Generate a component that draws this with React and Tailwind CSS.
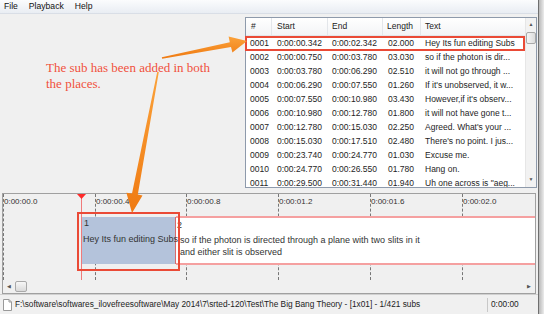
import React from 'react';

const rows = [
  ['0001', '0:00:00.342', '0:00:02.342', '02.000', 'Hey Its fun editing Subs'],
  ['0002', '0:00:00.750', '0:00:03.780', '03.030', 'so if the photon is dir...'],
  ['0003', '0:00:03.780', '0:00:06.290', '02.510', 'it will not go through ...'],
  ['0004', '0:00:06.290', '0:00:07.550', '01.260', "If it's unobserved, it w..."],
  ['0005', '0:00:07.550', '0:00:10.980', '03.430', "However,if it's observ..."],
  ['0006', '0:00:10.980', '0:00:12.780', '01.800', 'it will not have gone t...'],
  ['0007', '0:00:12.780', '0:00:15.030', '02.250', "Agreed. What's your ..."],
  ['0008', '0:00:15.030', '0:00:17.510', '02.480', "There's no point. I jus..."],
  ['0009', '0:00:23.740', '0:00:24.770', '01.030', 'Excuse me.'],
  ['0010', '0:00:24.770', '0:00:26.550', '01.780', 'Hang on.'],
  ['0011', '0:00:29.500', '0:00:31.440', '01.940', 'Uh one across is "aeg...'],
];

const ticks = [
  { x: 0, label: '0:00:00.0' },
  { x: 92, label: '0:00:00.4' },
  { x: 183, label: '0:00:00.8' },
  { x: 275, label: '0:00:01.2' },
  { x: 367, label: '0:00:01.6' },
  { x: 459, label: '0:00:02.0' },
];

const SubsTable = () => (
  <div className="w-[292px] h-[171px] border border-[#8e9aab] bg-white flex overflow-hidden">
    <div className="flex-1 min-w-0 flex flex-col">
      {/* header */}
      <div className="flex h-[18px] shrink-0 items-center bg-gradient-to-b from-white to-[#f3f4f6] border-b border-[#e3e6ea] text-[#222]">
        <div className="w-[26px] pl-[5px] border-r border-[#e3e6ea] h-full flex items-center">#</div>
        <div className="w-[56px] pl-[5px] border-r border-[#e3e6ea] h-full flex items-center">Start</div>
        <div className="w-[55px] pl-[4px] border-r border-[#e3e6ea] h-full flex items-center">End</div>
        <div className="w-[38px] pl-[4px] border-r border-[#e3e6ea] h-full flex items-center">Length</div>
        <div className="flex-1 pl-[4px] h-full flex items-center">Text</div>
      </div>
      {rows.map((r) => (
        <div key={r[0]} className="flex h-[14px] shrink-0 items-center text-[#1e1e1e] whitespace-nowrap">
          <div className="w-[26px] pl-[4px]">{r[0]}</div>
          <div className="w-[56px] pl-[5px]">{r[1]}</div>
          <div className="w-[55px] pl-[4px]">{r[2]}</div>
          <div className="w-[38px] pl-[5px]">{r[3]}</div>
          <div className="flex-1 pl-[4px] overflow-hidden">{r[4]}</div>
        </div>
      ))}
    </div>
    {/* vertical scrollbar */}
    <div className="w-[11px] bg-[#f2f2f2] border-l border-[#e6e6e6] flex flex-col items-center">
      <div className="h-[14px] flex items-center justify-center text-[#555] text-[5px]">▲</div>
      <div className="w-[10px] h-[12px] rounded-[2px] border border-[#a9a9a9] bg-gradient-to-r from-[#f5f5f5] to-[#dcdcdc]" />
      <div className="flex-1" />
      <div className="h-[14px] flex items-center justify-center text-[#555] text-[5px]">▼</div>
    </div>
  </div>
);

const Timeline = () => (
  <div className="h-[101px] ml-[2px] mr-[2px] border border-[#a0a0a0] flex flex-col bg-[#f0f0f0]">
    <div className="relative h-[86px] overflow-hidden">
      {ticks.map((t) => (
        <div key={t.label}>
          <div className="absolute top-0 h-full border-l border-dashed border-[#777]" style={{ left: t.x }} />
          <div className="absolute top-[3px] text-[8px] text-[#333] leading-[10px]" style={{ left: t.x + 1 }}>
            {t.label}
          </div>
        </div>
      ))}
      {/* subtitle 2 */}
      <div className="absolute left-[173px] top-[22px] w-[400px] h-[49px] bg-white border-y-2 border-[#f5a0a0] text-[9px] text-[#333] leading-[12px]">
        <div className="pl-[1px] pt-[1px]">2</div>
        <div className="pl-[4px] pt-[3px] whitespace-nowrap">so if the photon is directed through a plane with two slits in it</div>
        <div className="pl-[4px] whitespace-nowrap">and either slit is observed</div>
      </div>
      {/* subtitle 1 (selected) */}
      <div className="absolute left-[79px] top-[23px] w-[94px] h-[47px] bg-[#b4c3db] border-r border-[#d96a6a] text-[9px] text-[#333] leading-[12px]">
        <div className="pl-[2px]">1</div>
        <div className="pl-[1px] pt-[4px] whitespace-nowrap">Hey Its fun editing Subs</div>
      </div>
      {/* playhead */}
      <div className="absolute left-[78px] top-[3px] h-full w-px bg-[#f07a7a]" />
      <svg className="absolute left-[74px] top-0" width="9" height="6" viewBox="0 0 9 6">
        <polygon points="0,0 9,0 4.5,5" fill="#ff2a2a" />
      </svg>
    </div>
    {/* horizontal scrollbar */}
    <div className="h-[13px] flex items-center bg-[#f0f0f0]">
      <div className="w-[12px] flex justify-center text-[5px] text-[#555]">◀</div>
      <div className="w-[12px] h-[11px] rounded-[2px] border border-[#a9a9a9] bg-gradient-to-b from-[#f7f7f7] to-[#dadada]" />
      <div className="flex-1" />
      <div className="w-[12px] flex justify-center text-[5px] text-[#555]">▶</div>
    </div>
  </div>
);

const App = () => {
  return (
    <div className="relative w-[544px] h-[314px] overflow-hidden bg-[#f0f0f0] font-['Liberation_Sans',Arial,sans-serif] text-[8.5px]">
      <div className="flex h-full">
        <div className="w-[538px] flex flex-col">
          {/* Menu bar */}
          <div className="h-[14px] shrink-0 flex items-center bg-gradient-to-b from-[#fbfcfd] to-[#e9edf3] border-b border-[#d9dee6] text-[8.6px] text-[#111]">
            <span className="ml-[4px]">File</span>
            <span className="ml-[11px]">Playback</span>
            <span className="ml-[11px]">Help</span>
          </div>

          {/* Top pane */}
          <div className="h-[179px] shrink-0 pt-[3px] pr-[1px] flex justify-end">
            <SubsTable />
          </div>

          {/* Timeline */}
          <Timeline />

          {/* Status bar */}
          <div className="flex-1 flex items-center border-t border-[#d0d0d0] text-[8.3px] text-[#222] whitespace-nowrap">
            <svg className="ml-[3px]" width="9" height="12" viewBox="0 0 9 12">
              <path d="M0.5 0.5 H6 L8.5 3 V11.5 H0.5 Z" fill="#fff" stroke="#999" />
              <path d="M6 0.5 V3 H8.5" fill="none" stroke="#999" />
            </svg>
            <span className="ml-[3px] w-[472px] overflow-hidden">
              F:\software\softwares_ilovefreesoftware\May 2014\7\srted-120\Test\The Big Bang Theory - [1x01] - 1/421 subs
            </span>
            <div className="h-[14px] border-l border-[#c8c8c8] pl-[3px] flex items-center">0:00:00</div>
          </div>
        </div>
        {/* window frame */}
        <div className="w-[6px] border-l border-[#6f6f6f] bg-gradient-to-r from-[#b9b9b9] to-[#ececec]" />
      </div>

      {/* annotation */}
      <div className="absolute left-[46px] top-[60px] font-['Liberation_Serif',serif] text-[13px] leading-[16px] text-[#f0503c]">
        <div>The sub has been added in both</div>
        <div>the places.</div>
      </div>

      {/* highlight boxes */}
      <div className="absolute left-[245px] top-[36px] w-[280px] h-[15px] border-2 border-[#ea4a36]" />
      <div className="absolute left-[77px] top-[212px] w-[103px] h-[59px] border-2 border-[#ea4a36]" />

      {/* arrows */}
      <svg className="absolute left-0 top-0" width="544" height="314" viewBox="0 0 544 314">
        <defs>
          <linearGradient id="og" x1="0" y1="0" x2="0" y2="1">
            <stop offset="0" stopColor="#fba23a" />
            <stop offset="1" stopColor="#ef7a12" />
          </linearGradient>
        </defs>
        <polygon
          points="161.8,57.2 229.8,42.3 228.6,36.5 247,41 232.4,52.5 231.0,47.1 162.2,58.8"
          fill="url(#og)"
        />
        <polygon
          points="157.2,71.9 158.8,72.1 137.8,194.5 142.5,195.5 132,213 126.4,192.8 132.0,193.6"
          fill="url(#og)"
        />
      </svg>
    </div>
  );
};

export default App;
